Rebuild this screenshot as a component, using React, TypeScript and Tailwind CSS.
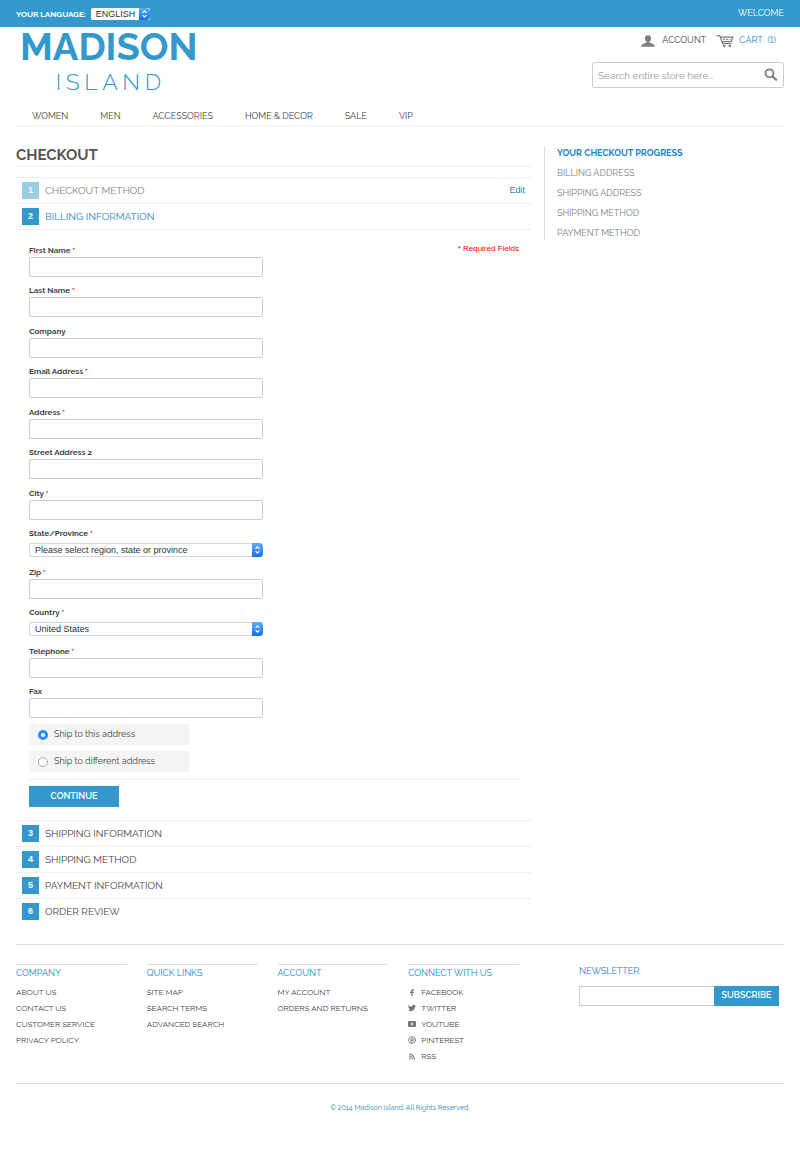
import { useState, type ReactNode } from "react";
import { FaFacebookF, FaTwitter, FaRss } from "react-icons/fa";

const NAV = ["Women", "Men", "Accessories", "Home & Decor", "Sale", "VIP"];
const PROGRESS = ["Billing Address", "Shipping Address", "Shipping Method", "Payment Method"];
const NEXT_STEPS = ["Shipping Information", "Shipping Method", "Payment Information", "Order Review"];

const FOOTER_LINKS = [
  { title: "Company", links: ["About Us", "Contact Us", "Customer Service", "Privacy Policy"] },
  { title: "Quick Links", links: ["Site Map", "Search Terms", "Advanced Search"] },
  { title: "Account", links: ["My Account", "Orders and Returns"] },
];

const SOCIAL = [
  { label: "Facebook", icon: <FaFacebookF className="h-[7px] w-2" /> },
  { label: "Twitter", icon: <FaTwitter className="h-2 w-2" /> },
  { label: "YouTube", icon: <YoutubeIcon /> },
  { label: "Pinterest", icon: <PinterestIcon /> },
  { label: "RSS", icon: <FaRss className="h-[7px] w-2" /> },
];

function YoutubeIcon() {
  return (
    <svg viewBox="0 0 16 12" className="h-1.5 w-2" aria-hidden="true">
      <path fill="currentColor" fillRule="evenodd" d="M2 0h12a2 2 0 0 1 2 2v8a2 2 0 0 1-2 2H2a2 2 0 0 1-2-2V2a2 2 0 0 1 2-2Zm4 3v6l5-3-5-3Z" />
    </svg>
  );
}

function PinterestIcon() {
  return (
    <svg viewBox="0 0 16 16" className="h-2 w-2" fill="none" stroke="currentColor" strokeLinecap="round" aria-hidden="true">
      <circle cx="8" cy="8" r="7" strokeWidth="1.700" />
      <path strokeWidth="1.700" d="M5.600 9.200C4 6.500 5.600 4.300 8.200 4.300c2.400 0 3.500 1.700 3 3.700-.6 2.500-3 2.700-3.500 1.400M8.300 6.800 6.600 13" />
    </svg>
  );
}

function AccountIcon() {
  return (
    <svg viewBox="0 0 16 13" className="h-3 w-3.5 text-[#808080]" aria-hidden="true">
      <path fill="currentColor" d="M8 0c2.300 0 3.600 1.300 3.500 3.500-.1 1.800-.8 3-1.700 3.700v1.100c.8.800 2.500 1 4 1.700 1.300.6 1.900 1.400 1.900 3H.3c0-1.600.6-2.400 1.900-3 1.500-.7 3.200-.9 4-1.700V7.200C5.300 6.500 4.600 5.300 4.500 3.500 4.400 1.300 5.700 0 8 0Z" />
    </svg>
  );
}

function CartIcon() {
  return (
    <svg viewBox="0 0 18 14" className="h-3.5 w-[18px] text-[#808080]" fill="none" stroke="currentColor" aria-hidden="true">
      <path strokeWidth="1.300" d="M.5 1.600h3.200l3 8h8.800M4.200 3.200h12.600l-1.600 4.500H6" />
      <path strokeWidth="1.200" strokeDasharray="2 1.300" d="M7 5.400h7.500" />
      <circle cx="8.200" cy="12" r="1.300" fill="currentColor" stroke="none" />
      <circle cx="13.800" cy="12" r="1.300" fill="currentColor" stroke="none" />
    </svg>
  );
}

function SearchIcon() {
  return (
    <svg viewBox="0 0 14 14" className="h-3.5 w-3.5 text-[#808080]" fill="none" stroke="currentColor" aria-hidden="true">
      <circle cx="5.500" cy="5.300" r="4" strokeWidth="1.800" />
      <path strokeWidth="2.200" d="m8.400 8.200 4.500 4.300" />
    </svg>
  );
}

function SelectArrows() {
  return (
    <span className="pointer-events-none absolute inset-y-0 right-0 flex w-[11px] items-center justify-center rounded-r-sm bg-gradient-to-b from-[#5fadf8] to-[#0b6ff2]">
      <svg viewBox="0 0 8 12" className="h-2.5 w-[7px]" fill="none" stroke="white" strokeWidth="1.300" aria-hidden="true">
        <path d="M1.700 4.700 4 2.200l2.300 2.500M1.700 7.300 4 9.800l2.300-2.500" />
      </svg>
    </span>
  );
}

function FieldLabel({ id, label, required }: { id: string; label: string; required?: boolean }) {
  return (
    <label htmlFor={id} className="block text-[8px] leading-[14px] font-bold text-[#444]">
      {label} {required && <span className="text-[#f00]">*</span>}
    </label>
  );
}

function TextField({ id, label, required }: { id: string; label: string; required?: boolean }) {
  return (
    <div>
      <FieldLabel id={id} label={label} required={required} />
      <input id={id} type="text" className="block h-5 w-full rounded-xs border border-[#ccc] bg-white px-1.5 text-[10px] focus:border-[#3399cc] focus:outline-none" />
    </div>
  );
}

function SelectField({ id, label, options }: { id: string; label: string; options: string[] }) {
  return (
    <div className="pb-0.5">
      <FieldLabel id={id} label={label} required />
      <div className="relative mt-[3px]">
        <select
          id={id}
          className="block h-3.5 w-full appearance-none rounded-xs border border-[#d5d5d5] bg-white pr-4 pl-[5px] font-[Liberation_Sans,sans-serif] text-[9px] leading-3 text-[#333]"
        >
          {options.map((o) => (
            <option key={o}>{o}</option>
          ))}
        </select>
        <SelectArrows />
      </div>
    </div>
  );
}

type StepProps = { n: number; title: string; state?: "done" | "active" | "next"; action?: ReactNode };

function StepTitle({ n, title, state = "next", action }: StepProps) {
  const color = state === "done" ? "text-[#808080]" : state === "active" ? "text-[#2284c5]" : "text-[#444]";
  return (
    <div className="flex h-[25px] items-center px-1.5">
      <span
        className={`flex h-[17px] w-[17px] items-center justify-center font-[Liberation_Sans,sans-serif] text-[9px] font-bold text-white ${state === "done" ? "bg-[#99cce5]" : "bg-[#3399cc]"}`}
      >
        {n}
      </span>
      <h2 className={`ml-1.5 flex-1 text-[10px] uppercase ${color}`}>{title}</h2>
      {action}
    </div>
  );
}

function BillingForm() {
  const [shipTo, setShipTo] = useState("this");
  return (
    <form className="relative py-[13px] pr-3 pl-[13px]" onSubmit={(e) => e.preventDefault()}>
      <p className="absolute top-3 right-3 font-[Liberation_Sans,sans-serif] text-[8px] leading-[14px] text-[#f00]">* Required Fields</p>
      <div className="max-w-[234px] space-y-[7px]">
        <div className="space-y-1.5">
          <TextField id="firstname" label="First Name" required />
          <TextField id="lastname" label="Last Name" required />
        </div>
        <div className="space-y-1.5">
          <TextField id="company" label="Company" />
          <TextField id="email" label="Email Address" required />
        </div>
        <div className="space-y-1.5">
          <TextField id="street1" label="Address" required />
          <TextField id="street2" label="Street Address 2" />
        </div>
        <div className="space-y-1.5">
          <TextField id="city" label="City" required />
          <SelectField id="region" label="State/Province" options={["Please select region, state or province"]} />
          <TextField id="zip" label="Zip" required />
          <SelectField id="country" label="Country" options={["United States"]} />
          <TextField id="telephone" label="Telephone" required />
          <TextField id="fax" label="Fax" />
        </div>
      </div>
      <div className="mt-1.5 w-40 space-y-1.5">
        {[
          { value: "this", label: "Ship to this address" },
          { value: "different", label: "Ship to different address" },
        ].map((o) => (
          <label key={o.value} className="flex h-[21px] items-center gap-1.5 bg-[#f4f4f4] px-[9px] text-[9px] text-[#444]">
            <input
              type="radio"
              name="shipto"
              checked={shipTo === o.value}
              onChange={() => setShipTo(o.value)}
              className="h-2.5 w-2.5 appearance-none rounded-full border border-[#aaa] bg-white checked:border-[3px] checked:border-[#2b8cf7]"
            />
            {o.label}
          </label>
        ))}
      </div>
      <div className="mt-[7px] border-t border-[#eee] pt-1.5">
        <button type="submit" className="block h-[21px] w-[90px] bg-[#3399cc] text-[9px] font-semibold text-white uppercase hover:bg-[#2e8ab8]">
          Continue
        </button>
      </div>
    </form>
  );
}

function Header() {
  return (
    <header>
      <div className="flex h-[27px] items-center justify-between bg-[#3399cc] px-4 text-[9px] text-white uppercase">
        <div className="flex items-center gap-[5px]">
          <label htmlFor="language" className="text-[8px] font-bold">Your Language:</label>
          <div className="relative">
            <select id="language" className="block h-3 appearance-none rounded-xs bg-white pr-3.5 pl-[5px] font-[Liberation_Sans,sans-serif] text-[9px] leading-3 text-[#333] uppercase">
              <option>English</option>
            </select>
            <SelectArrows />
          </div>
        </div>
        <span>Welcome</span>
      </div>

      <div className="mx-4 flex items-start justify-between">
        <a href="#" className="flex flex-col items-center pl-1 text-[#3399cc] uppercase">
          <span className="text-[38px] leading-10 font-bold">Madison</span>
          <span className="pl-1 text-[23px] leading-[30px] font-light tracking-[0.2em]">Island</span>
        </a>
        <div className="flex w-48 flex-col">
          <div className="flex h-7 items-center justify-end pr-2 text-[9px] lining-nums uppercase">
            <a href="#" className="flex items-center gap-[7px] text-[#444]">
              <AccountIcon /> Account
            </a>
            <a href="#" className="ml-2.5 flex items-center gap-[5px] text-[#2284c5]">
              <CartIcon /> Cart&nbsp; (1)
            </a>
          </div>
          <form className="mt-[7px] flex h-[26px] items-center rounded-xs border border-[#ccc] px-[5px]" onSubmit={(e) => e.preventDefault()}>
            <input type="search" aria-label="Search entire store" placeholder="Search entire store here..." className="min-w-0 flex-1 text-[10px] text-[#555] placeholder:text-[#999] focus:outline-none" />
            <button type="submit" aria-label="Search">
              <SearchIcon />
            </button>
          </form>
        </div>
      </div>

      <nav className="mx-4 mt-[9px] flex h-[21px] items-end gap-8 border-b border-[#f0f0f0] px-4 pb-[3px] text-[9px] leading-[14px] text-[#444] uppercase">
        {NAV.map((item) => (
          <a key={item} href="#" className="hover:text-[#3399cc]">{item}</a>
        ))}
      </nav>
    </header>
  );
}

function Footer() {
  return (
    <footer className="mx-4 mt-5 border-t border-[#ddd] pt-[19px] text-[8px] text-[#444] uppercase">
      <div className="flex justify-between gap-[60px] pr-[5px]">
        <div className="grid flex-1 grid-cols-4 gap-5">
          {FOOTER_LINKS.map((col) => (
            <div key={col.title} className="border-t border-[#ddd]">
              <h3 className="mb-[3px] text-[9px] leading-4 text-[#2284c5]">{col.title}</h3>
              <ul>
                {col.links.map((l) => (
                  <li key={l} className="leading-4"><a href="#" className="hover:text-[#3399cc]">{l}</a></li>
                ))}
              </ul>
            </div>
          ))}
          <div className="border-t border-[#ddd]">
            <h3 className="mb-[3px] text-[9px] leading-4 text-[#2284c5]">Connect With Us</h3>
            <ul>
              {SOCIAL.map((s) => (
                <li key={s.label} className="leading-4">
                  <a href="#" className="flex items-center gap-[5px] hover:text-[#3399cc]">
                    <span className="text-[#777]">{s.icon}</span>
                    {s.label}
                  </a>
                </li>
              ))}
            </ul>
          </div>
        </div>
        <form className="w-[200px]" onSubmit={(e) => e.preventDefault()}>
          <label htmlFor="newsletter" className="block text-[9px] leading-[14px] text-[#2284c5]">Newsletter</label>
          <div className="mt-2 flex h-5">
            <input id="newsletter" type="email" className="min-w-0 flex-1 border border-r-0 border-[#ccc] px-1.5 text-[10px] focus:outline-none" />
            <button type="submit" className="w-[65px] bg-[#3399cc] text-[9px] font-semibold text-white uppercase hover:bg-[#2e8ab8]">Subscribe</button>
          </div>
        </form>
      </div>
      <p className="mt-[19px] border-t border-[#ddd] py-[18px] text-center text-[7px] leading-3 text-[#2284c5] normal-case">
        © 2014 Madison Island. All Rights Reserved.
      </p>
    </footer>
  );
}

export default function App() {
  return (
    <div className="min-h-screen bg-white font-[Raleway,Lato,sans-serif] leading-normal">
      <Header />
      <div className="mx-4 mt-[18px] flex items-start gap-[13px]">
        <main className="flex-1">
          <h1 className="mb-2.5 border-b border-[#eee] text-[15px] leading-[21px] font-bold text-[#555] uppercase">Checkout</h1>
          <ol>
            <li className="border-t border-[#eee]">
              <StepTitle n={1} title="Checkout Method" state="done" action={<a href="#" className="font-[Liberation_Sans,sans-serif] text-[9px] text-[#2284c5]">Edit</a>} />
            </li>
            <li className="border-t border-[#eee]">
              <StepTitle n={2} title="Billing Information" state="active" />
              <div className="border-t border-[#eee]">
                <BillingForm />
              </div>
            </li>
            {NEXT_STEPS.map((title, i) => (
              <li key={title} className="border-t border-[#eee]">
                <StepTitle n={i + 3} title={title} />
              </li>
            ))}
          </ol>
        </main>
        <aside className="mt-px w-[240px] border-l border-[#ddd] pl-3 text-[9px] leading-[14px] uppercase">
          <h2 className="font-bold text-[#2284c5]">Your Checkout Progress</h2>
          <ul className="mt-1.5 space-y-1.5 text-[#808080]">
            {PROGRESS.map((p) => (
              <li key={p}>{p}</li>
            ))}
          </ul>
        </aside>
      </div>
      <Footer />
    </div>
  );
}
